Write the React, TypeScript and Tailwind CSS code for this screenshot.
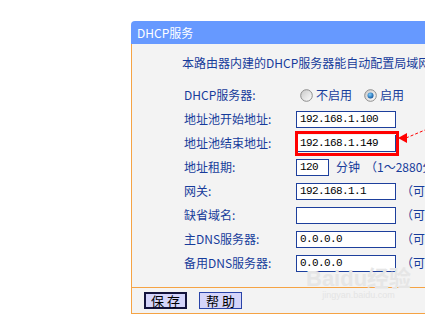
import React from "react";

const blue = "text-[#173c9b]";
const mono = { fontFamily: '"Liberation Mono", "DejaVu Sans Mono", monospace', letterSpacing: "-0.6px" };

function Input({ value, w = "w-[100px]" }: { value: string; w?: string }) {
  return (
    <div
      className={`${w} shrink-0 h-[17px] bg-white border border-[#1d3f9c] flex items-center pl-[3px] text-[11px] text-black`}
      style={mono}
    >
      {value}
    </div>
  );
}

function Row({ label, children }: { label: string; children: React.ReactNode }) {
  return (
    <div className="flex items-center h-[24px] whitespace-nowrap">
      <div className={`w-[112px] shrink-0 ${blue}`}>{label}</div>
      <div className="flex items-center shrink-0">{children}</div>
    </div>
  );
}

function Note({ text }: { text: string }) {
  return <span className={`ml-[5px] shrink-0 whitespace-nowrap ${blue}`}>{text}</span>;
}

function Radio({ checked }: { checked?: boolean }) {
  return (
    <svg width="13" height="13" viewBox="0 0 13 13" className="shrink-0">
      <defs>
        <linearGradient id={checked ? "rg1" : "rg0"} x1="0" y1="0" x2="1" y2="1">
          <stop offset="0" stopColor="#c8c8c8" />
          <stop offset="1" stopColor="#ffffff" />
        </linearGradient>
        <radialGradient id="dot" cx="0.4" cy="0.35" r="0.7">
          <stop offset="0" stopColor="#7fd0ff" />
          <stop offset="1" stopColor="#0a4f9a" />
        </radialGradient>
      </defs>
      <circle cx="6.5" cy="6.5" r="5.8" fill={`url(#${checked ? "rg1" : "rg0"})`} stroke="#8c8c8c" strokeWidth="1" />
      {checked && <circle cx="6.5" cy="6.5" r="3" fill="url(#dot)" />}
    </svg>
  );
}

export default function App() {
  return (
    <div
      className="relative w-[425px] h-[314px] overflow-hidden bg-white text-[12px] leading-[16px]"
      style={{ fontFamily: '"Noto Sans CJK SC", "Noto Sans", sans-serif' }}
    >
      <div className="ml-[131px] mt-[21px] w-[330px]">
        <div className="h-[23px] bg-[#6699ff] rounded-tl-[4px] flex items-center pl-[6px] text-white">
          DHCP服务
        </div>
        <div className="bg-[#f3f3f3] border-l border-b border-[#f5a344]">
          <div className="border-b border-[#f5a344] pb-[12px]">
            <div className={`pt-[11px] pl-[50px] h-[39px] whitespace-nowrap ${blue}`}>
              本路由器内建的DHCP服务器能自动配置局域网中各计算机的TCP/IP协议。
            </div>
            <div className="pl-[52px]">
              <Row label="DHCP服务器:">
                <div className="ml-[4px] flex items-center">
                  <Radio />
                  <span className={`ml-[3px] ${blue}`}>不启用</span>
                  <span className="ml-[12px]" />
                  <Radio checked />
                  <span className={`ml-[3px] ${blue}`}>启用</span>
                </div>
              </Row>
              <Row label="地址池开始地址:">
                <Input value="192.168.1.100" />
              </Row>
              <Row label="地址池结束地址:">
                <div className="relative">
                  <div
                    className="w-[100px] h-[17px] bg-white border-b border-r border-[#1d3f9c] flex items-center pl-[4px] text-[11px] text-black"
                    style={mono}
                  >
                    192.168.1.149
                  </div>
                  <div className="absolute left-[-1px] top-[-4px] w-[104px] h-[25px] border-[3px] border-[#ff0000]" />
                </div>
              </Row>
              <Row label="地址租期:">
                <Input value="120" w="w-[33px]" />
                <span className={`ml-[7px] shrink-0 ${blue}`}>分钟</span>
                <Note text="（1～2880分钟，缺省为120分钟）" />
              </Row>
              <Row label="网关:">
                <Input value="192.168.1.1" />
                <Note text="（可选）" />
              </Row>
              <Row label="缺省域名:">
                <Input value="" />
                <Note text="（可选）" />
              </Row>
              <Row label="主DNS服务器:">
                <Input value="0.0.0.0" />
                <Note text="（可选）" />
              </Row>
              <Row label="备用DNS服务器:">
                <Input value="0.0.0.0" />
                <Note text="（可选）" />
              </Row>
            </div>
          </div>
          <div className="h-[25px] flex items-center pl-[12px] gap-[12px]">
            <button className="w-[43px] h-[17px] bg-[#d5d5fa] border-2 border-[#14143c] flex items-center justify-center text-[13px] leading-[13px] text-black">
              保 存
            </button>
            <button className="w-[43px] h-[17px] bg-[#d5d5fa] border border-[#2a44a8] flex items-center justify-center text-[13px] leading-[13px] text-black">
              帮 助
            </button>
          </div>
        </div>
      </div>

      <svg className="absolute left-[396px] top-[124px]" width="29" height="22" viewBox="0 0 29 22">
        <polygon points="2,14 11,9 11,19" fill="#ff0000" />
        <line x1="10" y1="14" x2="29" y2="6" stroke="#ff0000" strokeWidth="1" strokeDasharray="3 2" />
      </svg>

      <div className="absolute left-[306px] top-[268px] flex flex-col items-center pointer-events-none">
        <span
          className="text-[22px] leading-[22px] font-bold text-[#e6e6e6]"
          style={{ fontFamily: '"Liberation Sans", "Noto Sans CJK SC", sans-serif' }}
        >
          Baidu经验
        </span>
        <span
          className="text-[9px] leading-[10px] text-[#e4e4e4]"
          style={{ fontFamily: '"Liberation Sans", sans-serif' }}
        >
          jingyan.baidu.com
        </span>
      </div>
    </div>
  );
}
